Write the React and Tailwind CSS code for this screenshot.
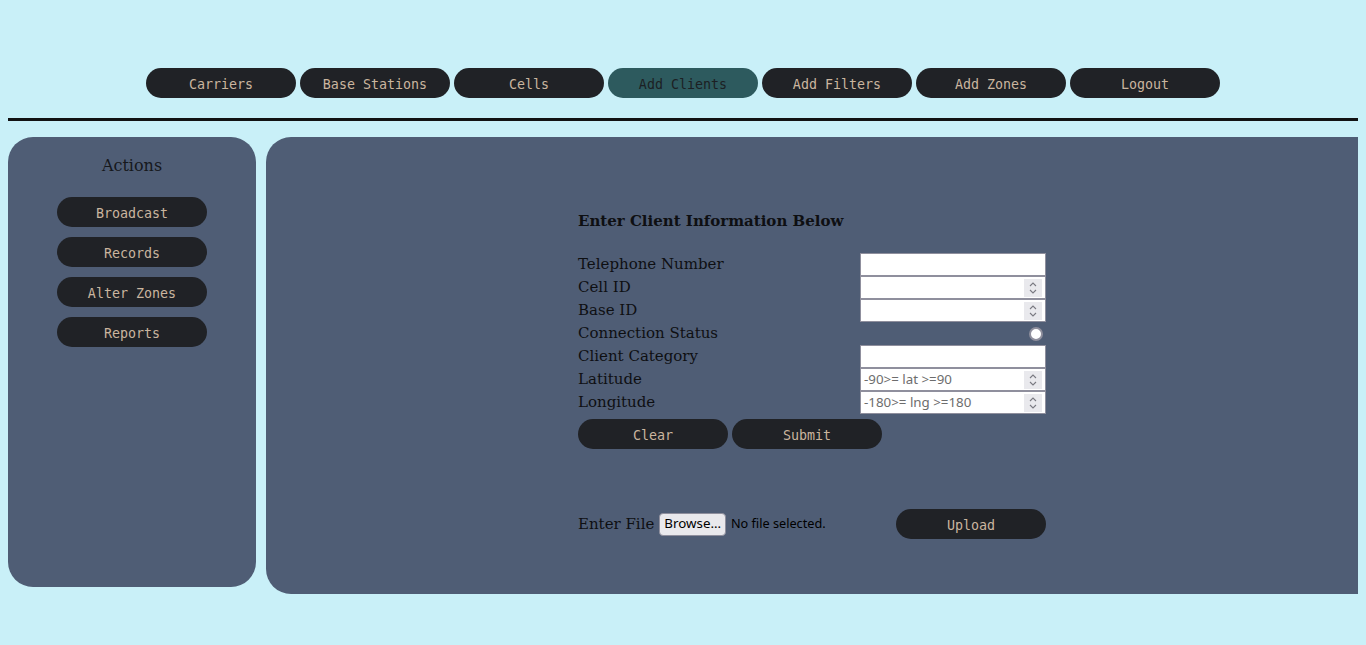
import React from "react";

const mono = { fontFamily: '"DejaVu Sans Mono", monospace' };

function PillButton({ children, active = false }) {
  return (
    <button
      className={
        "h-[30px] w-[150px] rounded-[15px] pt-[3px] text-[13.33px] leading-none " +
        (active ? "bg-[#2d5a5e] text-[#1c2023]" : "bg-[#202226] text-[#cab59f]")
      }
      style={mono}
    >
      {children}
    </button>
  );
}

function Spinner() {
  return (
    <div className="absolute right-[3px] top-[2px] flex h-[18px] w-[18px] flex-col items-center justify-center bg-[#e9e9ed]">
      <svg width="10" height="16" viewBox="0 0 10 16" fill="none" stroke="#7a7a82" strokeWidth="1.1">
        <path d="M2 6 L5 3 L8 6" />
        <path d="M2 10 L5 13 L8 10" />
      </svg>
    </div>
  );
}

function TextInput({ placeholder, spinner }) {
  return (
    <div className="relative h-[23px] w-[186px] border border-[#8f8f9d] bg-white">
      {placeholder && (
        <span
          className="absolute left-[3px] top-[2px] text-[13.33px] leading-[17px] text-[#6d6d6d]"
          style={{ fontFamily: '"Noto Sans", sans-serif' }}
        >
          {placeholder}
        </span>
      )}
      {spinner && <Spinner />}
    </div>
  );
}

function Row({ label, children }) {
  return (
    <div className="flex h-[23px] items-center">
      <div className="w-[282px] text-[15px] leading-[23px] text-[#0e0f12]">{label}</div>
      <div className="flex w-[186px] justify-end">{children}</div>
    </div>
  );
}

export default function App() {
  const nav = ["Carriers", "Base Stations", "Cells", "Add Clients", "Add Filters", "Add Zones", "Logout"];
  const actions = ["Broadcast", "Records", "Alter Zones", "Reports"];
  return (
    <div
      className="min-h-[645px] w-full overflow-hidden bg-[#c9f0f8] px-[8px]"
      style={{ fontFamily: '"DejaVu Serif", serif' }}
    >
      <div className="flex justify-center gap-[4px] pt-[68px]">
        {nav.map((n) => (
          <PillButton key={n} active={n === "Add Clients"}>
            {n}
          </PillButton>
        ))}
      </div>
      <div className="mt-[20px] h-[3px] bg-[#111213]" />
      <div className="mt-[16px] flex gap-[10px]">
        <aside className="flex h-[450px] w-[248px] shrink-0 flex-col items-center rounded-[25px] bg-[#4f5d75]">
          <h2 className="mt-[18px] text-[16px] leading-[22px] text-[#16181c]">Actions</h2>
          <div className="mt-[20px] flex flex-col gap-[10px]">
            {actions.map((a) => (
              <PillButton key={a}>{a}</PillButton>
            ))}
          </div>
        </aside>
        <main className="h-[457px] flex-1 rounded-l-[25px] bg-[#4f5d75] pl-[312px] pt-[73px]">
          <div className="w-[468px]">
            <h3 className="text-[15px] font-bold leading-[22px] text-[#0e0f12]">Enter Client Information Below</h3>
            <div className="mt-[21px] flex flex-col">
              <Row label="Telephone Number">
                <TextInput />
              </Row>
              <Row label="Cell ID">
                <TextInput spinner />
              </Row>
              <Row label="Base ID">
                <TextInput spinner />
              </Row>
              <Row label="Connection Status">
                <div className="mr-[3px] h-[14px] w-[14px] rounded-full border-2 border-[#8f8f9d] bg-white" />
              </Row>
              <Row label="Client Category">
                <TextInput />
              </Row>
              <Row label="Latitude">
                <TextInput placeholder="-90>= lat >=90" spinner />
              </Row>
              <Row label="Longitude">
                <TextInput placeholder="-180>= lng >=180" spinner />
              </Row>
            </div>
            <div className="mt-[5px] flex gap-[4px]">
              <PillButton>Clear</PillButton>
              <PillButton>Submit</PillButton>
            </div>
            <div className="mt-[60px] flex items-center">
              <span className="text-[15px] leading-[22px] text-[#0e0f12]">Enter File</span>
              <button
                className="ml-[5px] h-[23px] rounded-[4px] border border-[#8f8f9d] bg-[#e9e9ed] px-[4px] text-[13.33px] leading-none text-black"
                style={{ fontFamily: '"Noto Sans", sans-serif' }}
              >
                Browse…
              </button>
              <span
                className="ml-[5px] text-[12.7px] text-black"
                style={{ fontFamily: '"Noto Sans", sans-serif' }}
              >
                No file selected.
              </span>
              <div className="ml-auto">
                <PillButton>Upload</PillButton>
              </div>
            </div>
          </div>
        </main>
      </div>
    </div>
  );
}
